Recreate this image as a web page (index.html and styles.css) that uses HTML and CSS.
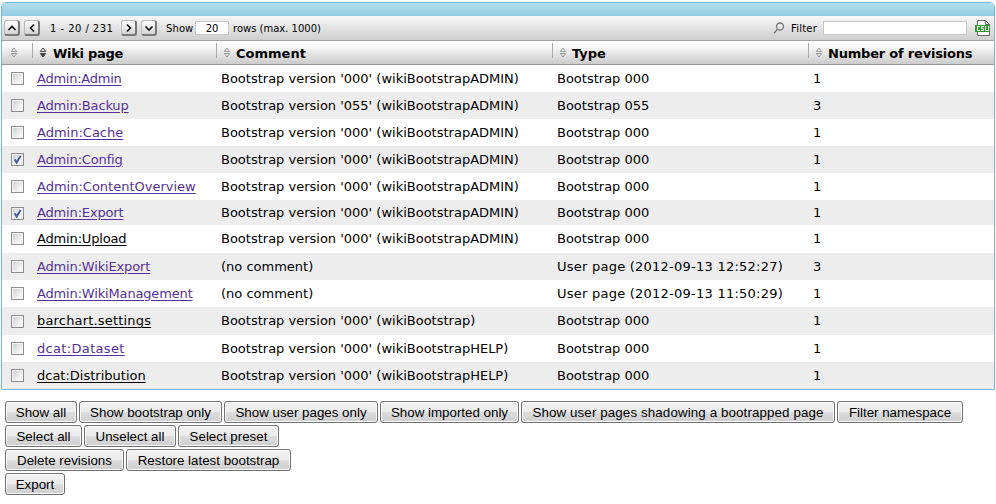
FILE: index.html
```
<!DOCTYPE html>
<html lang="en">
<head>
<meta charset="utf-8">
<title>Wiki pages</title>
<link rel="stylesheet" href="styles.css">
</head>
<body>
<svg width="0" height="0" class="defs">
<symbol id="sort" viewBox="0 0 8 11"><path class="up" fill="none" d="M4 1 6.7 4.5H1.3Z"/><path class="down" d="M1.3 6.5H6.7L4 10Z"/></symbol>
<symbol id="tick" viewBox="0 0 13 13"><path d="M3.7 6.2 5.6 9.5 9.6 3" fill="none" stroke="#43629f" stroke-width="2"/></symbol>
</svg>
<main class="panel">
<div class="caption"></div>
<div class="toolbar">
<button class="nav"><svg viewBox="0 0 14 14"><path d="M3.5 9 7 5.5 10.5 9"/></svg></button>
<button class="nav prev"><svg viewBox="0 0 14 14"><path d="M9 3.5 5.5 7 9 10.5"/></svg></button>
<span class="range">1 - 20 / 231</span>
<button class="nav"><svg viewBox="0 0 14 14"><path d="M5 3.5 8.5 7 5 10.5"/></svg></button>
<button class="nav last"><svg viewBox="0 0 14 14"><path d="M3.5 5.5 7 9 10.5 5.5"/></svg></button>
<span class="show">Show</span>
<input class="count" value="20">
<span class="rows">rows (max. 1000)</span>
<svg class="lens" viewBox="0 0 12 12"><circle cx="7" cy="4.5" r="3.5"/><path d="M4.5 7.2 1 11.2"/></svg>
<span class="filter-label">Filter</span>
<input class="filter">
<svg class="csv" viewBox="0 0 16 17"><path d="M2.5.5H10.5L14.5 4.5V15.5H2.5Z" fill="#fff" stroke="#666"/><path d="M10.5.5V4.5H14.5" fill="none" stroke="#666"/><path d="M0 5H15V12H0Z" fill="#2e9b2e"/><path d="M5 6.5H2.5V10.5H5M9 6.5H6.5V8.5H8.5V10.5H6M10.5 6V10.5H13.5V6" fill="none" stroke="#fff"/></svg>
</div>
<div class="grid head">
<div class="h"><svg class="sort"><use href="#sort"/></svg></div>
<div class="h"><svg class="sort active"><use href="#sort"/></svg><b class="t1">Wiki page</b></div>
<div class="h"><svg class="sort"><use href="#sort"/></svg><b>Comment</b></div>
<div class="h"><svg class="sort"><use href="#sort"/></svg><b>Type</b></div>
<div class="h"><svg class="sort"><use href="#sort"/></svg><b class="t4">Number of revisions</b></div>
</div>
<div class="grid row"><i class="box"></i><a class="tight" href="#">Admin:Admin</a><span>Bootstrap version '000' (wikiBootstrapADMIN)</span><span>Bootstrap 000</span><span>1</span></div>
<div class="grid row"><i class="box"></i><a class="snug" href="#">Admin:Backup</a><span>Bootstrap version '055' (wikiBootstrapADMIN)</span><span>Bootstrap 055</span><span>3</span></div>
<div class="grid row"><i class="box"></i><a href="#">Admin:Cache</a><span>Bootstrap version '000' (wikiBootstrapADMIN)</span><span>Bootstrap 000</span><span>1</span></div>
<div class="grid row"><i class="box"><svg><use href="#tick"/></svg></i><a class="snug" href="#">Admin:Config</a><span>Bootstrap version '000' (wikiBootstrapADMIN)</span><span>Bootstrap 000</span><span>1</span></div>
<div class="grid row"><i class="box"></i><a href="#">Admin:ContentOverview</a><span>Bootstrap version '000' (wikiBootstrapADMIN)</span><span>Bootstrap 000</span><span>1</span></div>
<div class="grid row short"><i class="box"><svg><use href="#tick"/></svg></i><a class="snug" href="#">Admin:Export</a><span>Bootstrap version '000' (wikiBootstrapADMIN)</span><span>Bootstrap 000</span><span>1</span></div>
<div class="grid row upload"><i class="box"></i><a class="new snug" href="#">Admin:Upload</a><span>Bootstrap version '000' (wikiBootstrapADMIN)</span><span>Bootstrap 000</span><span>1</span></div>
<div class="grid row"><i class="box"></i><a class="snug" href="#">Admin:WikiExport</a><span>(no comment)</span><span class="date">User page (2012-09-13 12:52:27)</span><span>3</span></div>
<div class="grid row"><i class="box"></i><a class="snug" href="#">Admin:WikiManagement</a><span>(no comment)</span><span class="date">User page (2012-09-13 11:50:29)</span><span>1</span></div>
<div class="grid row tall"><i class="box"></i><a class="new loose" href="#">barchart.settings</a><span>Bootstrap version '000' (wikiBootstrap)</span><span>Bootstrap 000</span><span>1</span></div>
<div class="grid row"><i class="box"></i><a class="wide" href="#">dcat:Dataset</a><span>Bootstrap version '000' (wikiBootstrapHELP)</span><span>Bootstrap 000</span><span>1</span></div>
<div class="grid row"><i class="box"></i><a class="new" href="#">dcat:Distribution</a><span>Bootstrap version '000' (wikiBootstrapHELP)</span><span>Bootstrap 000</span><span>1</span></div>
</main>
<div class="actions">
<div class="line"><button class="w72">Show all</button><button class="w143">Show bootstrap only</button><button class="w154">Show user pages only</button><button class="w139">Show imported only</button><button class="w314">Show user pages shadowing a bootrapped page</button><button class="w126">Filter namespace</button></div>
<div class="line"><button class="w77">Select all</button><button class="w92">Unselect all</button><button class="w101">Select preset</button></div>
<div class="line"><button class="w119">Delete revisions</button><button class="w165">Restore latest bootstrap</button></div>
<div class="line"><button class="w60">Export</button></div>
</div>
</body>
</html>
```
FILE: styles.css
```
* { box-sizing: border-box; }
html, body { height: 504px; overflow: hidden; }
body { margin: 0; padding: 2px 1px 0; background: #fff; color: #000; font: 13px/18px "DejaVu Sans", Verdana, sans-serif; }
.defs { position: absolute; }
.panel { width: 994px; height: 388px; border: 1px solid #72b9d9; border-radius: 5px 5px 0 0; overflow: hidden; }
.caption { height: 13px; background: linear-gradient(#b4deef, #94cce3); }
.toolbar { height: 25px; display: flex; align-items: center; padding: 0 3px 0 2px; background: linear-gradient(#f7f7f7, #cfcfcf); border-bottom: 1px solid #a3a3a3; font-size: 10px; white-space: nowrap; }
.nav { width: 16px; height: 16px; flex: none; padding: 0; border: 1px solid #bbb; border-right: 2px solid #777; border-bottom: 2px solid #777; border-radius: 3px; background: linear-gradient(#fff, #d4d4d4); display: flex; align-items: center; justify-content: center; }
.nav svg { width: 14px; height: 14px; flex: none; fill: none; stroke: #111; stroke-width: 1.6; }
.prev { margin-left: 4px; }
.last { margin-left: 4px; }
.range { width: 81px; padding: 1px 0 0 10px; font-size: 10px; letter-spacing: .45px; }
.show { width: 29px; margin-left: 9px; padding-top: 1px; letter-spacing: .1px; }
.count { width: 34px; height: 14px; padding: 0; border: 1px solid #ccc; text-align: center; font: 10px "DejaVu Sans", sans-serif; }
.rows { margin-left: 4px; padding-top: 1px; }
.lens { width: 12px; height: 12px; margin-left: auto; fill: none; stroke: #777; stroke-width: 1.3; }
.filter-label { width: 32px; margin-left: 6px; padding-top: 1px; letter-spacing: .2px; }
.filter { width: 144px; height: 14px; border: 1px solid #c8c8c8; padding: 0; }
.csv { width: 16px; height: 17px; margin-left: 8px; flex: none; }
.grid { display: grid; grid-template-columns: 30px 184px 336px 256px 1fr; }
.head { height: 24px; background: linear-gradient(#fff 10%, #ccc); border-bottom: 1px solid #999; }
.h { display: flex; align-items: center; white-space: nowrap; height: 23px; padding-left: 8px; }
.h b { padding-top: 2px; }
.t1 { letter-spacing: -.3px; }
.t4 { letter-spacing: -.2px; }
.h + .h::before { content: ""; align-self: flex-start; width: 1px; height: 15px; margin: 2px 6px 0 -8px; background: #aaa; }
.sort { width: 8px; height: 11px; margin: 0 5px 0 0; fill: none; stroke: #999; flex: none; }
.active { margin-right: 6px; stroke: #444; fill: #444; }
.row { height: 27px; align-items: center; white-space: nowrap; }
.row:nth-child(odd) { background: #ededed; }
.row:nth-child(even) { background: #fff; }
.short { height: 25px; padding-top: 1px; }
.upload { height: 28px; padding-bottom: 1px; }
.tall { height: 28px; }
.row > * { margin-left: 5px; }
.row .box { display: block; margin-left: 9px; width: 13px; height: 13px; border: 1px solid #8e8f8f; background: linear-gradient(135deg, #c9cdd2, #f6f6f6 75%); box-shadow: inset 0 0 0 1px #f4f4f4; }
.box svg { display: block; width: 13px; height: 13px; margin: -1px; }
a { color: #55309b; text-underline-offset: 2px; justify-self: start; }
a.new { color: #000; }
.tight { letter-spacing: -.25px; }
.snug { letter-spacing: -.16px; }
.loose { letter-spacing: .18px; }
.wide { letter-spacing: .33px; }
.date { letter-spacing: .24px; }
.actions { padding: 11px 0 0 4px; display: grid; gap: 2px; }
.line { display: flex; gap: 2px; }
.line button { height: 22px; padding: 0; border: 1px solid #707070; border-radius: 3px; background: linear-gradient(#f2f2f2, #ebebeb 50%, #ddd 50%, #cfcfcf); box-shadow: inset 0 0 0 1px #fafafa; color: #000; font: 13.33px "Liberation Sans", Arial, sans-serif; white-space: nowrap; }
.w72 { width: 72px; }
.w143 { width: 143px; }
.w154 { width: 154px; }
.w139 { width: 139px; }
.line .w314 { width: 314px; letter-spacing: .12px; }
.w126 { width: 126px; }
.w77 { width: 77px; }
.w92 { width: 92px; }
.w101 { width: 101px; }
.w119 { width: 119px; }
.w165 { width: 165px; }
.w60 { width: 60px; }
```
